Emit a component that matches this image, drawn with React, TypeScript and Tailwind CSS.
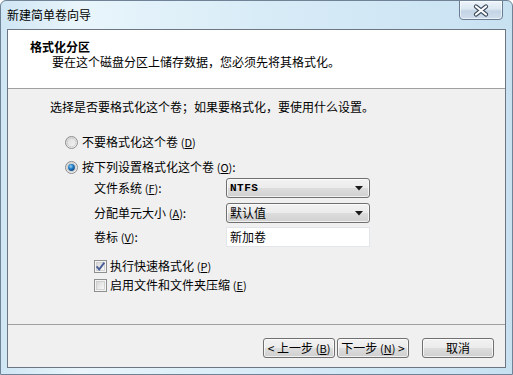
import React from "react";

const F = { fontFamily: '"Noto Sans CJK SC", "Noto Sans", sans-serif' };

function U({ c }: { c: string }) {
  return (
    <span className="text-[11px]">
      (<span className="underline underline-offset-1">{c}</span>)
    </span>
  );
}

function Radio({ checked }: { checked?: boolean }) {
  return (
    <svg width="13" height="13" viewBox="0 0 13 13" className="shrink-0">
      <defs>
        <linearGradient id="rb" x1="0" y1="0" x2="1" y2="1">
          <stop offset="0" stopColor="#d8d8d8" />
          <stop offset="1" stopColor="#f8f8f8" />
        </linearGradient>
        <radialGradient id="rd" cx="0.4" cy="0.35" r="0.7">
          <stop offset="0" stopColor="#9ad4f8" />
          <stop offset="0.5" stopColor="#1f7ac4" />
          <stop offset="1" stopColor="#0b3f7a" />
        </radialGradient>
      </defs>
      <circle cx="6.5" cy="6.5" r="6" fill="url(#rb)" stroke="#8d8d8d" strokeWidth="1" />
      <circle cx="6.5" cy="6.5" r="4.3" fill="none" stroke="#c8c8c8" strokeWidth="0.8" />
      {checked && <circle cx="6.5" cy="6.5" r="3.4" fill="url(#rd)" />}
    </svg>
  );
}

function Check({ checked }: { checked?: boolean }) {
  return (
    <svg width="13" height="13" viewBox="0 0 13 13" className="shrink-0">
      <defs>
        <linearGradient id="cb" x1="0" y1="0" x2="1" y2="1">
          <stop offset="0" stopColor="#d6d6d6" />
          <stop offset="1" stopColor="#fbfbfb" />
        </linearGradient>
      </defs>
      <rect x="0.5" y="0.5" width="12" height="12" fill="#f4f4f4" stroke="#8e8f8f" />
      <rect x="2.5" y="2.5" width="8" height="8" fill="url(#cb)" stroke="#c9c9c9" strokeWidth="0.8" />
      {checked && (
        <path d="M2.6 6.4 L5.2 9.4 L10.3 2.6" fill="none" stroke="#4a5f97" strokeWidth="1.9" />
      )}
    </svg>
  );
}

function Combo({ children }: { children: React.ReactNode }) {
  return (
    <div className="w-[144px] h-[20px] rounded-[3px] border border-[#707070] bg-[linear-gradient(#f3f3f3_0%,#ebebeb_50%,#dddddd_51%,#d0d0d0_100%)] flex items-center justify-between pl-[3px] pr-[6px] shadow-[inset_0_0_0_1px_rgba(255,255,255,0.7)]">
      <div className="flex items-center">{children}</div>
      <svg width="8" height="5" viewBox="0 0 8 5">
        <path d="M0 0 H8 L4 4.5 Z" fill="#1a1a1a" />
      </svg>
    </div>
  );
}

function Btn({ children }: { children: React.ReactNode }) {
  return (
    <div className="w-[72px] h-[20px] rounded-[3px] border border-[#707070] bg-[linear-gradient(#f2f2f2_0%,#ebebeb_50%,#dddddd_51%,#cfcfcf_100%)] flex items-center justify-center text-[12px] leading-[16px] text-black shadow-[inset_0_0_0_1px_rgba(255,255,255,0.7)]">
      <span className="whitespace-pre">{children}</span>
    </div>
  );
}

export default function App() {
  return (
    <div
      style={F}
      className="w-[513px] h-[375px] overflow-hidden flex flex-col rounded-t-[6px] border border-[#6f8296] bg-[linear-gradient(90deg,#cfe6f4_0%,#e9f5fb_15%,#d8ecf7_50%,#cfe6f4_80%,#c8e1f1_100%)] text-black"
    >
      <div className="h-[28px] flex items-start justify-between shrink-0">
        <div className="pl-[6px] pt-[6px] text-[12px] leading-[16px] text-black">新建简单卷向导</div>
        <div className="mr-[9px] -mt-px w-[44px] h-[20px] rounded-b-[4px] border border-[#6b7d92] bg-[linear-gradient(#eef5fb_0%,#dbe7f2_45%,#c3d4e5_55%,#cfdeec_100%)] shadow-[inset_0_0_0_1px_rgba(255,255,255,0.6)] flex items-center justify-center">
          <svg width="16" height="13" viewBox="0 0 16 13">
            <path d="M3 2.5 L13 10.5 M13 2.5 L3 10.5" stroke="#3b4a5c" strokeWidth="4.2" strokeLinecap="round" />
            <path d="M3 2.5 L13 10.5 M13 2.5 L3 10.5" stroke="#ffffff" strokeWidth="2.2" strokeLinecap="round" />
          </svg>
        </div>
      </div>

      <div className="flex-1 mx-[6px] mb-[6px] border border-[#6c7682] bg-[#f0f0f0] flex flex-col">
        <div className="h-[59px] shrink-0 bg-white border-b border-[#a0a0a0] pt-[9px] pl-[22px] text-[12px] leading-[15px]">
          <div className="font-bold">格式化分区</div>
          <div className="pl-[22px]">要在这个磁盘分区上储存数据，您必须先将其格式化。</div>
        </div>

        <div className="flex-1 flex flex-col pl-[42px] text-[12px] leading-[16px]">
          <div className="mt-[10px]">选择是否要格式化这个卷；如果要格式化，要使用什么设置。</div>

          <div className="mt-[19px] ml-[15px] flex items-center gap-[4px]">
            <Radio />
            <span>
              不要格式化这个卷 <U c="D" />
            </span>
          </div>
          <div className="mt-[9px] ml-[15px] flex items-center gap-[4px]">
            <Radio checked />
            <span>
              按下列设置格式化这个卷 <U c="O" />:
            </span>
          </div>

          <div className="ml-[44px] mt-[3px] grid grid-cols-[132px_144px] gap-y-[5px] items-center">
            <span>
              文件系统 <U c="F" />:
            </span>
            <Combo>
              <span className="font-bold text-[11px] tracking-[0.5px]" style={{ fontFamily: '"Liberation Mono", monospace' }}>
                NTFS
              </span>
            </Combo>
            <span>
              分配单元大小 <U c="A" />:
            </span>
            <Combo>
              <span>默认值</span>
            </Combo>
            <span className="-mt-px">
              卷标 <U c="V" />:
            </span>
            <div className="-mt-px w-[144px] h-[20px] bg-white border border-[#e2e5ea] flex items-center pl-[3px]">新加卷</div>
          </div>

          <div className="mt-[11px] ml-[44px] flex items-center gap-[3px]">
            <Check checked />
            <span>
              执行快速格式化 <U c="P" />
            </span>
          </div>
          <div className="mt-[3px] ml-[44px] flex items-center gap-[3px]">
            <Check />
            <span>
              启用文件和文件夹压缩 <U c="E" />
            </span>
          </div>
        </div>

        <div className="h-[43px] shrink-0 border-t border-[#a0a0a0] flex justify-end items-start pt-[13px] pr-[11px]">
          <div className="flex gap-[2px]">
            <Btn>
              {"< 上一步 "}<U c="B" />
            </Btn>
            <Btn>
              {"下一步 "}<U c="N" />{" >"}
            </Btn>
          </div>
          <div className="ml-[13px]">
            <Btn>取消</Btn>
          </div>
        </div>
      </div>
    </div>
  );
}
